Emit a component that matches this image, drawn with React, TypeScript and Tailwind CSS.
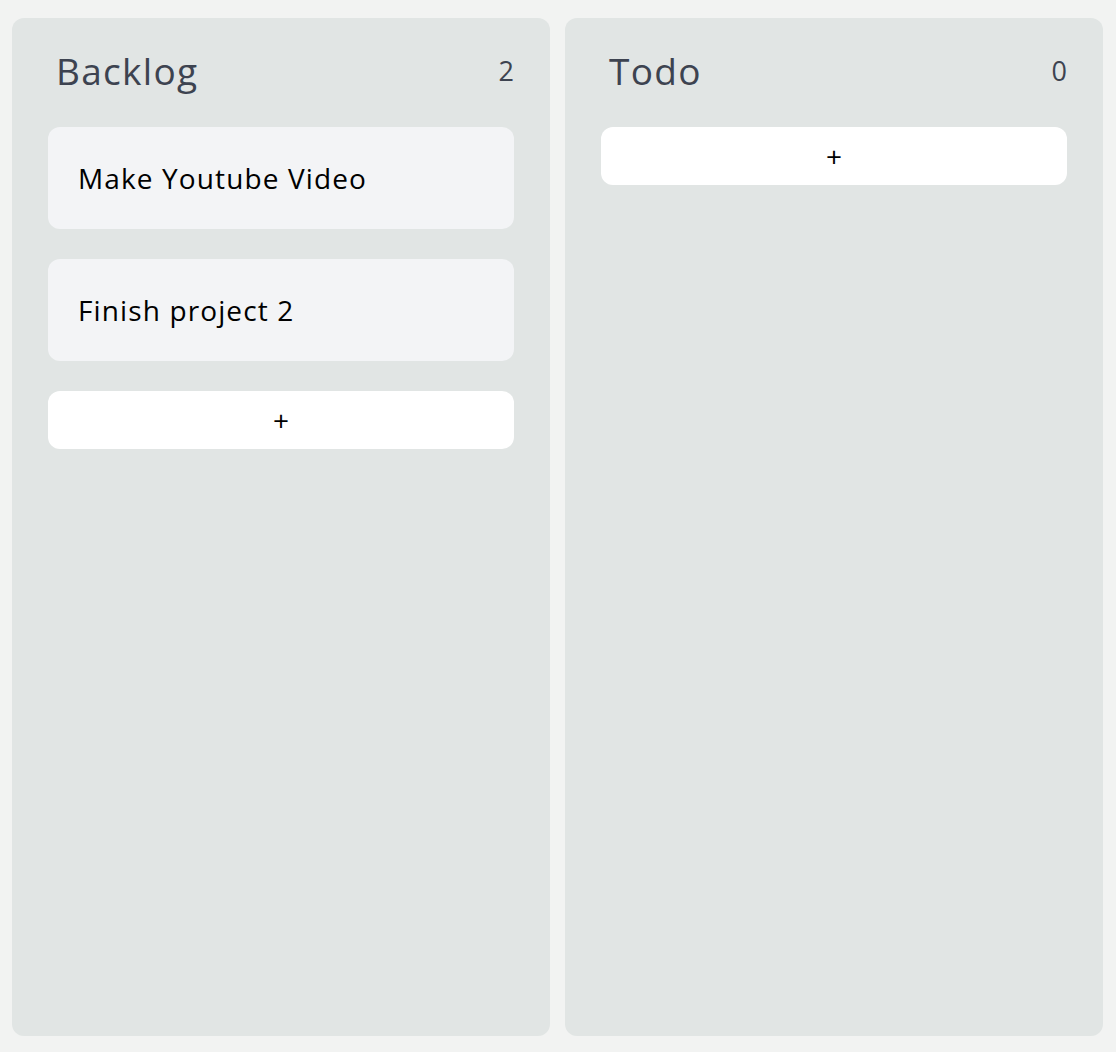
const columns = [
  { title: 'Backlog', cards: ['Make Youtube Video', 'Finish project 2'] },
  { title: 'Todo', cards: [] as string[] },
];

function Column({ title, cards }: { title: string; cards: string[] }) {
  return (
    <div className="flex-1 rounded-xl bg-[#e1e5e4] px-9 pt-[31px]">
      <div className="flex h-[42px] items-center justify-between pl-2">
        <h2 className="text-[37px] leading-none tracking-[0.035em] text-[#3d4350]">{title}</h2>
        <span className="text-[27px] leading-none text-[#3d4350]">{cards.length}</span>
      </div>
      <div className="mt-[36px] flex flex-col gap-[30px]">
        {cards.map((card) => (
          <div key={card} className="flex h-[102px] items-center rounded-xl bg-[#f3f4f6] px-[30px]">
            <span className="text-[28px] font-medium tracking-[0.04em] text-black">{card}</span>
          </div>
        ))}
        <button className="flex h-[58px] items-center justify-center rounded-xl bg-white text-[28px] font-medium leading-none text-black">
          +
        </button>
      </div>
    </div>
  );
}

export default function App() {
  return (
    <div
      className="flex h-[1052px] gap-[15px] bg-[#f2f3f2] pb-4 pl-3 pr-[13px] pt-[18px]"
      style={{ fontFamily: '"Open Sans", sans-serif' }}
    >
      {columns.map((col) => (
        <Column key={col.title} title={col.title} cards={col.cards} />
      ))}
    </div>
  );
}
